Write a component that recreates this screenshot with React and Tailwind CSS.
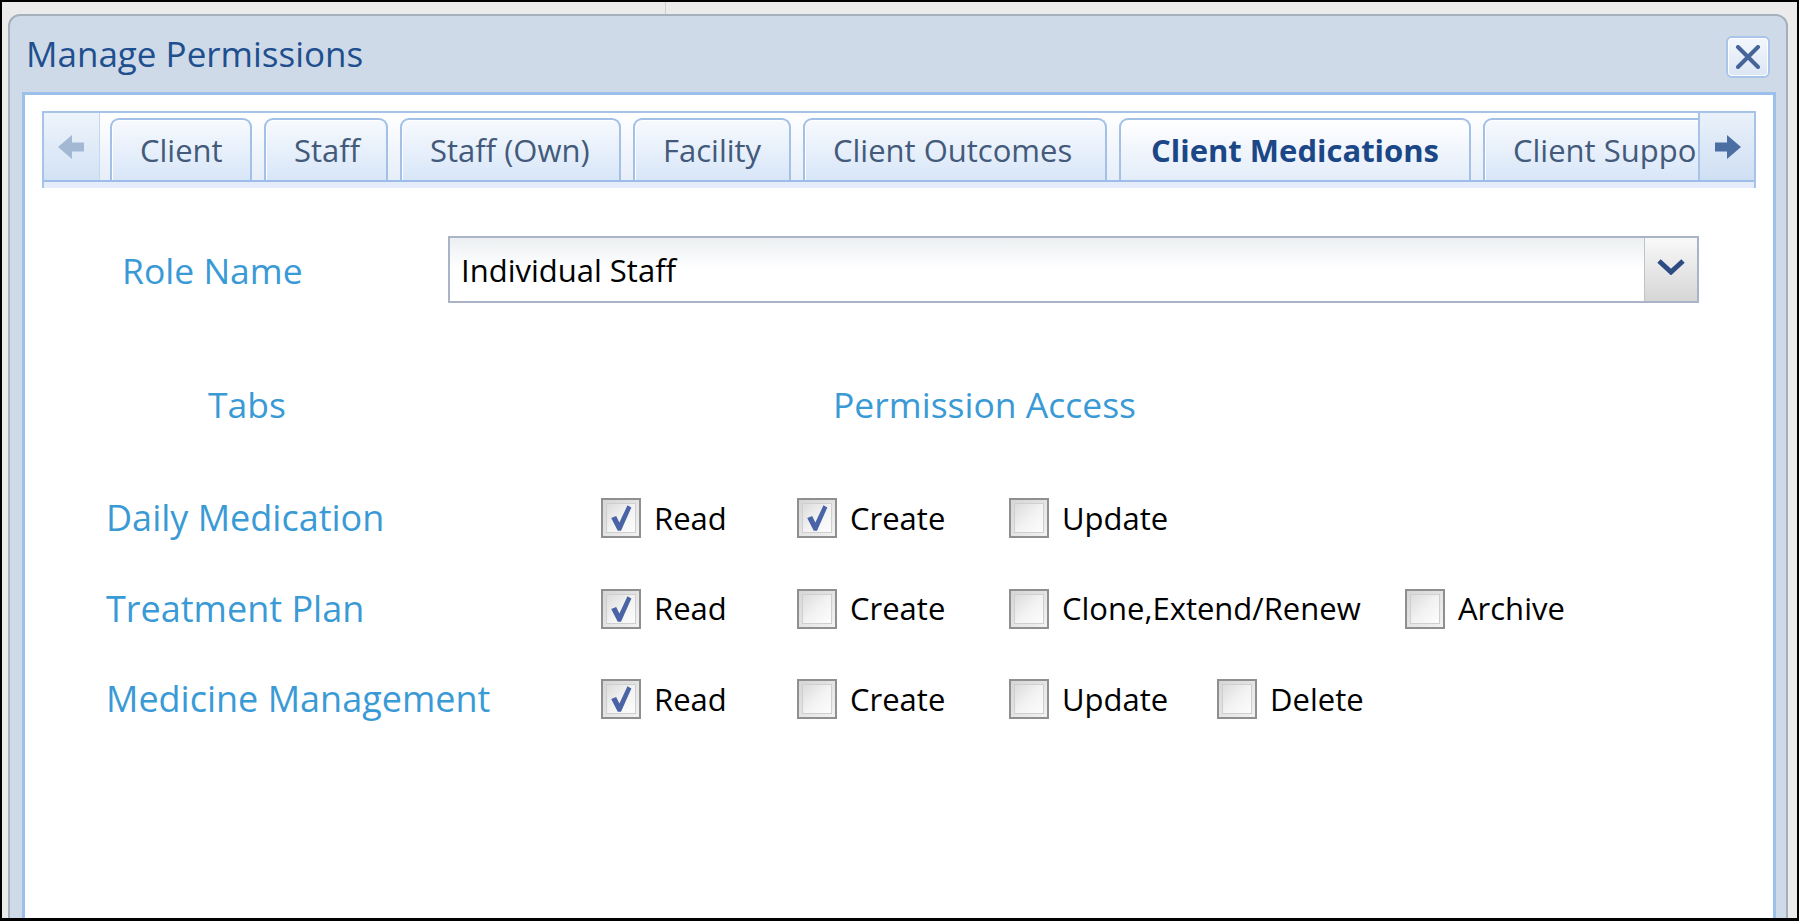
import React from "react";

const tabs = [
  { label: "Client", w: "w-[142px]" },
  { label: "Staff", w: "w-[124px]" },
  { label: "Staff (Own)", w: "w-[221px]" },
  { label: "Facility", w: "w-[158px]" },
  { label: "Client Outcomes", w: "w-[304px]" },
  { label: "Client Medications", w: "w-[352px]", active: true },
  { label: "Client Support", w: "w-[262px]" },
];

function Arrow({ dir, color }) {
  return (
    <svg width="30" height="26" viewBox="0 0 30 26" className={dir === "left" ? "-scale-x-100" : ""}>
      <path d="M3 8.5 H15 V1 L29 13 L15 25 V17.5 H3 Z" fill={color} />
    </svg>
  );
}

function Check({ checked }) {
  return (
    <div className="w-[40px] h-[40px] shrink-0 border-2 border-[#8f8f8f] bg-linear-to-br from-[#d6d6d6] to-[#f2f2f2] p-[3px]">
      <div className="w-full h-full border border-[#cfcfcf] bg-linear-to-br from-[#dcdcdc] via-[#f2f2f2] to-[#fdfdfd] flex items-center justify-center">
        {checked && (
          <svg width="28" height="30" viewBox="0 0 24 26">
            <path d="M3.5 13 L7.8 11.2 L10.6 17 L17.6 2 L21 3.8 L12 24 L9.2 24 Z" fill="#4a62a6" />
          </svg>
        )}
      </div>
    </div>
  );
}

function Item({ checked, label, w }) {
  return (
    <div className={`flex items-center gap-[13px] shrink-0 ${w}`}>
      <Check checked={checked} />
      <span className="text-[31px] text-black leading-none">{label}</span>
    </div>
  );
}

const rows = [
  {
    name: "Daily Medication",
    items: [
      { label: "Read", checked: true, w: "w-[196px]" },
      { label: "Create", checked: true, w: "w-[212px]" },
      { label: "Update", checked: false, w: "w-auto" },
    ],
  },
  {
    name: "Treatment Plan",
    items: [
      { label: "Read", checked: true, w: "w-[196px]" },
      { label: "Create", checked: false, w: "w-[212px]" },
      { label: "Clone,Extend/Renew", checked: false, w: "w-[396px]" },
      { label: "Archive", checked: false, w: "w-auto" },
    ],
  },
  {
    name: "Medicine Management",
    items: [
      { label: "Read", checked: true, w: "w-[196px]" },
      { label: "Create", checked: false, w: "w-[212px]" },
      { label: "Update", checked: false, w: "w-[208px]" },
      { label: "Delete", checked: false, w: "w-auto" },
    ],
  },
];

export default function App() {
  return (
    <div className="w-[1799px] h-[921px] overflow-hidden bg-black pt-[2px] pl-[2px] pr-[2px] pb-[3px] font-['Open_Sans',sans-serif]">
      <div className="w-full h-full bg-[#ebebeb] relative overflow-hidden pl-[6px] pt-[12px]">
        <div className="absolute left-[663px] top-0 w-px h-[12px] bg-[#cfcfcf]" />
        <div className="w-[1780px] h-[1000px] rounded-t-[12px] border-2 border-[#a5b0bd] bg-[#cedae7] flex flex-col">
          {/* title bar */}
          <div className="h-[76px] flex items-center justify-between pl-[16px] pr-[16px]">
            <span className="text-[35px] text-[#1f4f8f] leading-none -mt-[1px]">Manage Permissions</span>
            <div className="mt-[6px] w-[44px] h-[42px] rounded-[6px] border-2 border-[#a9c5ea] bg-linear-to-b from-[#f3f7fc] to-[#dbe6f4] flex items-center justify-center shadow-[inset_0_0_0_1px_#ffffff]">
              <svg width="28" height="24" viewBox="0 0 28 24">
                <path d="M4 2 L24 22 M24 2 L4 22" stroke="#46649a" strokeWidth="4" strokeLinecap="round" />
              </svg>
            </div>
          </div>
          {/* content */}
          <div className="ml-[12px] mr-[10px] flex-1 bg-white border-[3px] border-[#9cc0ec] pt-[16px]">
            {/* tab strip */}
            <div className="mx-[17px] h-[77px] flex flex-col border-l-2 border-r-2 border-[#a6c3e9]">
              <div className="h-[2px] bg-[#a6c3e9]" />
              <div className="h-[67px] flex bg-linear-to-b from-white to-[#e6eef9]">
                <div className="w-[56px] shrink-0 bg-linear-to-b from-[#eef4fb] to-[#d3e2f4] border-r border-[#c4d7ef] flex items-center justify-center">
                  <Arrow dir="left" color="#a3b8d3" />
                </div>
                <div className="flex-1 flex items-end gap-[12px] pl-[10px] overflow-hidden">
                  {tabs.map((t) =>
                    t.active ? (
                      <div
                        key={t.label}
                        className={`${t.w} shrink-0 h-[64px] -mb-[2px] relative z-10 rounded-t-[9px] border-2 border-b-0 border-[#a3c0e6] bg-linear-to-b from-white to-[#e2ecf9] flex items-center justify-center`}
                      >
                        <span className="text-[31px] font-bold text-[#1c4787] leading-none -mt-[2px]">{t.label}</span>
                      </div>
                    ) : (
                      <div
                        key={t.label}
                        className={`${t.w} shrink-0 h-[62px] rounded-t-[9px] border-2 border-b-0 border-[#a3c0e6] bg-linear-to-b from-[#f7fafe] to-[#d8e6f8] shadow-[inset_1px_1px_0_#ffffff] flex items-center pl-[28px]`}
                      >
                        <span className="text-[31px] text-[#435a7a] leading-none whitespace-nowrap">{t.label}</span>
                      </div>
                    )
                  )}
                </div>
                <div className="w-[56px] shrink-0 bg-linear-to-b from-[#eaf1fa] to-[#cfdff3] border-l-2 border-[#a6c3e9] flex items-center justify-center">
                  <Arrow dir="right" color="#4b6fa2" />
                </div>
              </div>
              <div className="h-[2px] bg-[#9dbde8]" />
              <div className="flex-1 bg-[#e4edf9]" />
            </div>

            {/* role row */}
            <div className="mt-[48px] h-[67px] flex items-center">
              <div className="w-[423px] shrink-0 pl-[97px] text-[35.5px] text-[#3a9ad6] leading-none mt-[3px]">Role Name</div>
              <div className="w-[1251px] h-[67px] border-2 border-[#abb4c6] flex">
                <div className="flex-1 flex items-center pl-[11px] bg-linear-to-b from-[#eceff1] via-white to-white">
                  <span className="text-[31px] text-black leading-none mt-[1px]">Individual Staff</span>
                </div>
                <div className="w-[53px] border-l border-[#bcc3cf] bg-linear-to-b from-[#f9f9f9] to-[#d6d6d6] flex items-center justify-center">
                  <svg width="28" height="16" viewBox="0 0 28 16" className="-mt-[6px]">
                    <path d="M2 2 L14 13 L26 2" stroke="#2d4c82" strokeWidth="5" fill="none" strokeLinejoin="miter" />
                  </svg>
                </div>
              </div>
            </div>

            {/* header */}
            <div className="mt-[78px] h-[48px] flex items-center text-[35.5px] text-[#3a9ad6] leading-none">
              <div className="w-[808px] shrink-0 pl-[183px]">Tabs</div>
              <div>Permission Access</div>
            </div>

            {/* rows */}
            <div className="mt-[44px] flex flex-col">
              {rows.map((r) => (
                <div key={r.name} className="h-[90.5px] flex items-center">
                  <div className="w-[576px] shrink-0 pl-[81px] text-[36px] text-[#3a9ad6] leading-none">{r.name}</div>
                  {r.items.map((it, i) => (
                    <Item key={i} checked={it.checked} label={it.label} w={it.w} />
                  ))}
                </div>
              ))}
            </div>
          </div>
        </div>
      </div>
    </div>
  );
}
